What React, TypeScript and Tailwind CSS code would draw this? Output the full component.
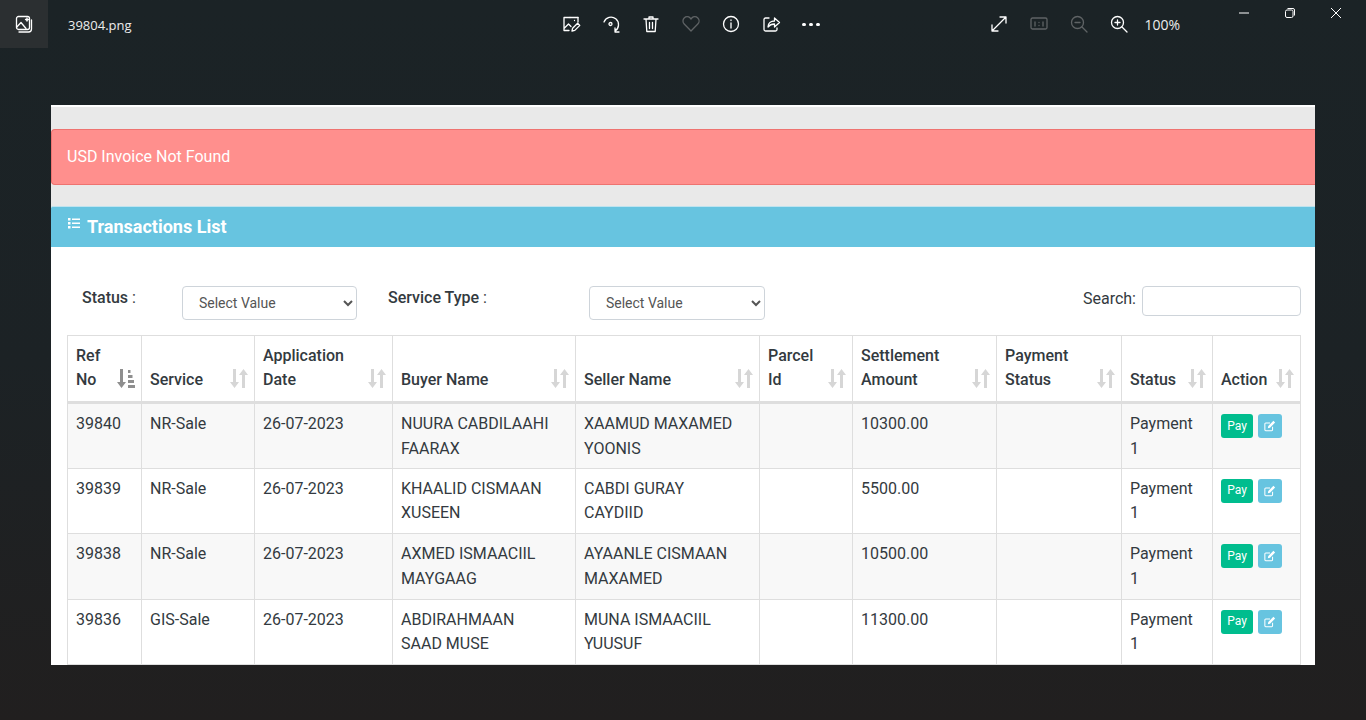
import { ReactNode } from 'react';

const rows = [
  { ref: '39840', service: 'NR-Sale', buyer: ['NUURA CABDILAAHI', 'FAARAX'], seller: ['XAAMUD MAXAMED', 'YOONIS'], amount: '10300.00' },
  { ref: '39839', service: 'NR-Sale', buyer: ['KHAALID CISMAAN', 'XUSEEN'], seller: ['CABDI GURAY', 'CAYDIID'], amount: '5500.00' },
  { ref: '39838', service: 'NR-Sale', buyer: ['AXMED ISMAACIIL', 'MAYGAAG'], seller: ['AYAANLE CISMAAN', 'MAXAMED'], amount: '10500.00' },
  { ref: '39836', service: 'GIS-Sale', buyer: ['ABDIRAHMAAN', 'SAAD MUSE'], seller: ['MUNA ISMAACIIL', 'YUUSUF'], amount: '11300.00' },
];

const headers = [
  { label: ['Ref', 'No'], width: 'w-[74px]', active: true },
  { label: ['Service'], width: 'w-[113px]' },
  { label: ['Application', 'Date'], width: 'w-[138px]' },
  { label: ['Buyer Name'], width: 'w-[183px]' },
  { label: ['Seller Name'], width: 'w-[184px]' },
  { label: ['Parcel', 'Id'], width: 'w-[93px]' },
  { label: ['Settlement', 'Amount'], width: 'w-[144px]' },
  { label: ['Payment', 'Status'], width: 'w-[125px]' },
  { label: ['Status'], width: 'w-[91px]' },
  { label: ['Action'], width: 'w-[88px]' },
];

function SortIcon({ active }: { active?: boolean }) {
  return (
    <svg viewBox="0 0 18 19" className="absolute right-[6px] bottom-[13px] h-[19px] w-[18px]">
      {active ? (
        <g fill="#8f8f8f">
          <path d="M3 0h3v13h3l-4.500 6L0 13h3z" />
          <path d="M11 1h2.500v3H11zM11 6h4.500v3H11zM11 11h6v3h-6zM11 16h7.500v3H11z" />
        </g>
      ) : (
        <g fill="#d6d6d6">
          <path d="M3 0h3v13h3l-4.500 6L0 13h3z" />
          <path d="M12 19h3V6h3l-4.500-6L9 6h3z" />
        </g>
      )}
    </svg>
  );
}

function Spot({ className }: { className: string }) {
  return <div className={className} />;
}

function ToolIcon({ children, dim }: { children: ReactNode; dim?: boolean }) {
  return (
    <svg
      viewBox="0 0 20 20"
      fill="none"
      stroke={dim ? '#5f6365' : '#ffffff'}
      strokeWidth="1.300"
      strokeLinecap="round"
      strokeLinejoin="round"
      className="h-5 w-5"
    >
      {children}
    </svg>
  );
}

export default function App() {
  return (
    <div
      className="flex h-[720px] w-[1366px] flex-col overflow-hidden bg-gradient-to-b from-[#1b2326] via-[#1c2225] to-[#211f1f] text-white"
      style={{ fontFamily: 'Roboto, sans-serif' }}
    >
      {/* viewer toolbar */}
      <div className="flex h-[48px] shrink-0 items-start">
        <div className="flex h-12 w-12 items-center justify-center bg-[#2b2f31]">
          <ToolIcon>
            <rect x="2.500" y="2.500" width="13" height="13" rx="2" />
            <path d="M2.800 13l4.200-4.500 5 6M13 6.500h0M17.500 6v9a3 3 0 0 1-3 3H5" />
            <path d="M11.500 5.500h3M13 4v3" />
          </ToolIcon>
        </div>
        <div className="ml-5 mt-[17px] text-[13px] leading-4 text-[#ececec]" style={{ fontFamily: '"Open Sans", sans-serif' }}>
          39804.png
        </div>
        <div className="ml-[429px] mt-[14px] flex w-[260px] items-center gap-5">
          <ToolIcon>
            <path d="M9 3.500H3v13h5M3.500 14l4-4 2.500 2.500M17 3.500V8" />
            <path d="M9 3.500h8M13.500 6.500h0" />
            <path d="M11 17l.6-2.800 5-5 2.200 2.200-5 5z" />
          </ToolIcon>
          <ToolIcon>
            <path d="M3 8a7.500 7.500 0 1 1 11 9M14 14v4h4" />
            <circle cx="9.500" cy="10" r="1.500" />
          </ToolIcon>
          <ToolIcon>
            <path d="M3 5h14M8 5V3h4v2M5 5l.8 12.500h8.400L15 5M8.500 8.500v6M11.500 8.500v6" />
          </ToolIcon>
          <ToolIcon dim>
            <path d="M10 17L3.200 10a4.200 4.200 0 0 1 6-6L10 5l.8-1a4.200 4.200 0 0 1 6 6z" />
          </ToolIcon>
          <ToolIcon>
            <circle cx="10" cy="10" r="7.500" />
            <path d="M10 9v5M10 6v.5" />
          </ToolIcon>
          <ToolIcon>
            <path d="M8 4H4.500A1.500 1.500 0 0 0 3 5.500v10A1.500 1.500 0 0 0 4.500 17h10a1.500 1.500 0 0 0 1.500-1.500V14" />
            <path d="M7 13c0-4 3-6 6.500-6V4l5 4.500-5 4.500v-3c-3 0-5 1-6.500 3z" />
          </ToolIcon>
          <div className="flex w-5 items-center justify-center gap-[3px]">
            <span className="h-[3px] w-[4px] rounded-full bg-white" />
            <span className="h-[3px] w-[4px] rounded-full bg-white" />
            <span className="h-[3px] w-[4px] rounded-full bg-white" />
          </div>
        </div>
        <div className="ml-[168px] mt-[14px] flex items-center gap-5">
          <ToolIcon>
            <path d="M3.500 16.500l13-13M11 3h6v6M3 11v6h6" />
          </ToolIcon>
          <ToolIcon dim>
            <rect x="2" y="4" width="16" height="11" rx="1.500" />
            <path d="M6 8v4M10 8.500v0M10 11.500v0M14 8v4" />
          </ToolIcon>
          <ToolIcon dim>
            <circle cx="8.500" cy="8.500" r="6" />
            <path d="M13 13l5 5M6 8.500h5" />
          </ToolIcon>
          <ToolIcon>
            <circle cx="8.500" cy="8.500" r="6" />
            <path d="M13 13l5 5M6 8.500h5M8.500 6v5" />
          </ToolIcon>
        </div>
        <div className="ml-[16px] mt-[17px] text-[14px] leading-4 text-[#ececec]" style={{ fontFamily: '"Open Sans", sans-serif' }}>
          100%
        </div>
        <div className="ml-[59px] mt-[8px] flex items-center gap-[36px]">
          <svg viewBox="0 0 10 10" className="h-[10px] w-[10px]" fill="none" stroke="#fff"><path d="M0 5h10" /></svg>
          <svg viewBox="0 0 10 10" className="h-[10px] w-[10px]" fill="none" stroke="#fff"><rect x=".5" y="2" width="7.500" height="7.500" rx="1.500" /><path d="M2.500 .5h5.500a1.500 1.500 0 0 1 1.500 1.500v5.500" /></svg>
          <svg viewBox="0 0 10 10" className="h-[10px] w-[10px]" fill="none" stroke="#fff"><path d="M0 0l10 10M10 0L0 10" /></svg>
        </div>
      </div>

      {/* screenshot being viewed */}
      <div className="ml-[51px] mt-[57px] flex h-[560px] w-[1264px] flex-col overflow-hidden bg-[#e9e9e9]">
        <div className="h-[2px] shrink-0 bg-white" />
        <div className="flex-1 overflow-hidden">
          <div className="mt-[22px] flex h-[56px] items-center rounded-l-[4px] border border-r-0 border-[#ee7370] bg-[#ff8f8d] pl-[15px] text-[16px] text-white">
            USD Invoice Not Found
          </div>
          <div className="mt-[21px] flex h-[41px] items-center rounded-tl-[2px] border-t border-[#bfe3ef] bg-[#67c4e0] pb-[2px] pl-[17px] text-[18px] font-bold text-white">
            <svg viewBox="0 0 12 11" className="mb-[6px] mr-[7px] h-[11px] w-[12px]" fill="#fff">
              <path d="M0 0h2.500v2.500H0zM0 4h2.500v2.500H0zM0 8h2.500v2.500H0zM4 .5h8V2H4zM4 4.500h8V6H4zM4 8.500h8V10H4z" />
            </svg>
            Transactions List
          </div>
          <div className="bg-white pl-4 pr-[14px]">
            <div className="flex h-[88px] items-start text-[16px] text-[#333a40]">
              <div className="ml-[15px] mt-[41px] leading-5"><span className="font-medium">Status</span> :</div>
              <select className="ml-[46px] mt-[39px] h-[34px] w-[175px] rounded border border-[#ced4da] bg-white pl-[12px] text-[14px] text-[#555]">
                <option>Select Value</option>
              </select>
              <div className="ml-[31px] mt-[41px] leading-5"><span className="font-medium">Service Type</span> :</div>
              <select className="ml-[102px] mt-[39px] h-[34px] w-[176px] rounded border border-[#ced4da] bg-white pl-[12px] text-[14px] text-[#555]">
                <option>Select Value</option>
              </select>
              <div className="ml-auto mt-[42px] leading-5">Search:</div>
              <input className="ml-[6px] mt-[39px] h-[30px] w-[159px] rounded border border-[#ced4da] bg-white" />
            </div>
            <table className="w-[1233px] table-fixed border-collapse text-[16px] leading-[24.500px] text-[#333a40]">
              <thead>
                <tr className="h-[67px]">
                  {headers.map((h, i) => (
                    <th key={i} className={`${h.width} relative border border-b-[3px] border-[#dedede] px-2 pb-[9px] text-left align-bottom font-medium`}>
                      {h.label.map((l) => (
                        <div key={l} className="leading-6">{l}</div>
                      ))}
                      <SortIcon active={h.active} />
                    </th>
                  ))}
                </tr>
              </thead>
              <tbody>
                {rows.map((r, i) => (
                  <tr key={r.ref} className={i % 2 === 0 ? 'h-[65.500px] bg-[#f8f8f8]' : 'h-[65.500px] bg-white'}>
                    <td className="border border-[#dedede] px-2 pt-2 align-top">{r.ref}</td>
                    <td className="border border-[#dedede] px-2 pt-2 align-top">{r.service}</td>
                    <td className="border border-[#dedede] px-2 pt-2 align-top">26-07-2023</td>
                    <td className="border border-[#dedede] px-2 pt-2 align-top">{r.buyer[0]}<br />{r.buyer[1]}</td>
                    <td className="border border-[#dedede] px-2 pt-2 align-top">{r.seller[0]}<br />{r.seller[1]}</td>
                    <td className="border border-[#dedede] px-2 pt-2 align-top"></td>
                    <td className="border border-[#dedede] px-2 pt-2 align-top">{r.amount}</td>
                    <td className="border border-[#dedede] px-2 pt-2 align-top"></td>
                    <td className="border border-[#dedede] px-2 pt-2 align-top">Payment<br />1</td>
                    <td className="border border-[#dedede] px-2 pt-[10px] align-top">
                      <div className="flex gap-[5px]">
                        <button className="flex h-6 w-8 items-center justify-center rounded-[3px] bg-[#00bd8e] text-[12px] text-white">Pay</button>
                        <button className="flex h-6 w-6 items-center justify-center rounded-[3px] bg-[#67c4e0]">
                          <svg viewBox="0 0 14 14" fill="none" stroke="#fff" strokeWidth="1.200" className="h-3 w-3">
                            <path d="M10 8v3.500a1 1 0 0 1-1 1H2a1 1 0 0 1-1-1V4.500a1 1 0 0 1 1-1h5" />
                            <path d="M5 7l-.5 2.500L7 9l6-6-2-2z" fill="#fff" stroke="none" />
                          </svg>
                        </button>
                      </div>
                    </td>
                  </tr>
                ))}
              </tbody>
            </table>
          </div>
        </div>
      </div>
    </div>
  );
}
